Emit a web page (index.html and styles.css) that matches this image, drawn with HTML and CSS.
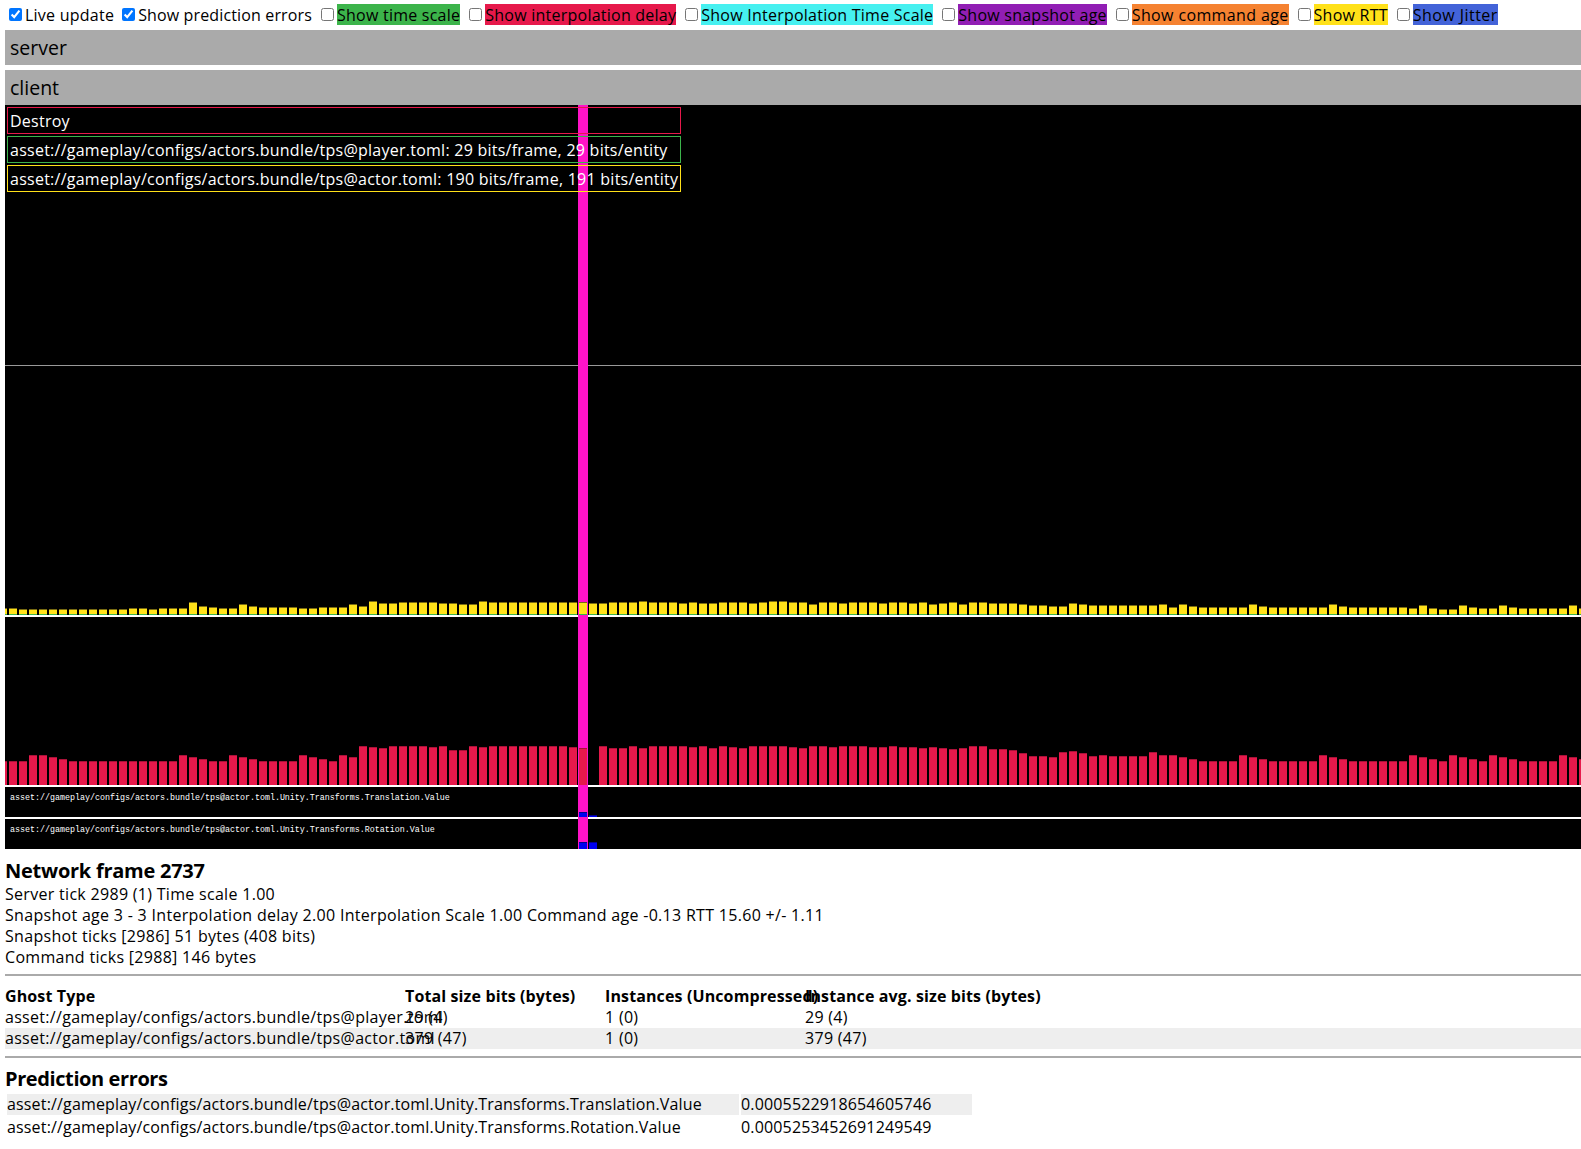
FILE: index.html
```html
<!DOCTYPE html>
<html lang="en">
<head>
<meta charset="UTF-8" />
<title>Network Debugger</title>
<link rel="stylesheet" href="styles.css">
</head>
<body>
  <div class="controls">
    <label class="opt opt-first"><input type="checkbox" checked /><span>Live update</span></label>
    <label class="opt"><input type="checkbox" checked /><span class="tight">Show prediction errors</span></label>
    <label class="opt"><input type="checkbox" /><span class="green">Show time scale</span></label>
    <label class="opt"><input type="checkbox" /><span class="red">Show interpolation delay</span></label>
    <label class="opt"><input type="checkbox" /><span class="cyan">Show Interpolation Time Scale</span></label>
    <label class="opt"><input type="checkbox" /><span class="purple">Show snapshot age</span></label>
    <label class="opt"><input type="checkbox" /><span class="orange">Show command age</span></label>
    <label class="opt"><input type="checkbox" /><span class="yellow">Show RTT</span></label>
    <label class="opt"><input type="checkbox" /><span class="blue">Show Jitter</span></label>
  </div>

  <div class="world">server</div>
  <div class="world client">client</div>

  <div class="graphs">
    <div class="selected"></div>

    <div class="graph graph-top">
      <div class="box box-red">Destroy</div>
      <div class="box box-green">asset://gameplay/configs/actors.bundle/tps@player.toml: 29 bits/frame, 29 bits/entity</div>
      <div class="box box-yellow">asset://gameplay/configs/actors.bundle/tps@actor.toml: 190 bits/frame, 191 bits/entity</div>
    </div>
    <div class="graph graph-size" id="sizeBars"></div>
    <div class="graph graph-delay" id="delayBars"></div>
    <div class="graph graph-error" id="errorA">
      <div class="graph-label">asset://gameplay/configs/actors.bundle/tps@actor.toml.Unity.Transforms.Translation.Value</div>
    </div>
    <div class="graph graph-error" id="errorB">
      <div class="graph-label">asset://gameplay/configs/actors.bundle/tps@actor.toml.Unity.Transforms.Rotation.Value</div>
    </div>
  </div>

  <h3 class="frame-title">Network frame 2737</h3>
  <div class="stats">
    <div>Server tick 2989 (1) Time scale 1.00</div>
    <div>Snapshot age 3 - 3 Interpolation delay 2.00 Interpolation Scale 1.00 Command age -0.13 RTT 15.60 +/- 1.11</div>
    <div>Snapshot ticks [2986] 51 bytes (408 bits)</div>
    <div>Command ticks [2988] 146 bytes</div>
  </div>

  <hr class="hr-ghosts" />

  <div class="ghost-row ghost-head">
    <div>Ghost Type</div><div>Total size bits (bytes)</div><div>Instances (Uncompressed)</div><div>Instance avg. size bits (bytes)</div>
  </div>
  <div class="ghost-row">
    <div>asset://gameplay/configs/actors.bundle/tps@player.toml</div><div>29 (4)</div><div>1 (0)</div><div>29 (4)</div>
  </div>
  <div class="ghost-row ghost-alt">
    <div>asset://gameplay/configs/actors.bundle/tps@actor.toml</div><div>379 (47)</div><div>1 (0)</div><div>379 (47)</div>
  </div>

  <hr class="hr-errors" />

  <h3 class="errors-title">Prediction errors</h3>
  <table class="errors">
    <tr class="errors-alt">
      <td>asset://gameplay/configs/actors.bundle/tps@actor.toml.Unity.Transforms.Translation.Value</td>
      <td>0.0005522918654605746</td>
    </tr>
    <tr>
      <td>asset://gameplay/configs/actors.bundle/tps@actor.toml.Unity.Transforms.Rotation.Value</td>
      <td>0.0005253452691249549</td>
    </tr>
  </table>

  <script>
    // One value per network frame, bar n sits at x = 10 * n - 6 inside the graph
    const SIZE = [7,7,6,6,6,6,6,6,6,6,6,6,6,7,7,6,7,7,7,13,9,8,7,7,11,9,8,8,8,8,7,7,8,8,8,11,9,14,12,12,13,
      13,13,13,12,12,11,11,14,13,13,13,13,13,13,13,13,13,13,12,12,13,13,13,14,13,13,13,12,13,12,12,13,13,13,12,13,14,14,13,
      13,11,13,13,12,13,13,13,12,13,13,12,13,11,12,13,11,13,13,12,12,12,11,10,10,9,9,12,11,10,10,10,10,10,10,10,11,8,11,9,
      8,8,8,8,8,11,9,8,8,8,8,8,8,11,9,8,8,8,8,8,8,7,10,7,6,6,10,8,7,7,10,8,7,7,7,7,7,10,7];

    const DELAY = [24,24,24,30,30,28,26,24,24,24,24,24,24,24,24,24,24,24,30,28,26,24,24,30,28,26,24,24,24,24,30,28,26,24,30,28,
      39,38,37,39,39,39,39,38,39,35,35,39,38,39,39,39,39,39,39,39,39,38,37,0,
      39,37,37,39,37,39,39,39,39,38,39,37,39,38,37,39,39,39,39,38,37,39,39,38,39,39,39,38,38,39,38,38,37,38,37,36,37,39,39,36,36,35,
      32,29,29,28,33,34,32,29,30,29,29,29,29,33,30,30,28,26,24,24,24,24,30,28,26,24,24,24,24,24,30,28,26,24,24,24,24,24,24,30,28,26,24,30,28,26,24,30,28,26,24,24,24,24,30,28,26];

    function drawBars(el, values, cls) {
      values.forEach((v, i) => {
        if (!v) return;
        const bar = document.createElement("div");
        bar.className = "bar " + cls;
        bar.style.left = (i * 10 - 6) + "px";
        bar.style.height = v + "px";
        el.appendChild(bar);
      });
    }

    drawBars(document.getElementById("sizeBars"), SIZE, "bar-size");
    drawBars(document.getElementById("delayBars"), DELAY, "bar-delay");

    // Only two frames have prediction errors
    function errorBars(id, a, b) {
      const el = document.getElementById(id);
      [[574, a], [584, b]].forEach(([x, h]) => {
        const bar = document.createElement("div");
        bar.className = "bar bar-error";
        bar.style.left = x + "px";
        bar.style.height = h + "px";
        el.appendChild(bar);
      });
    }
    errorBars("errorA", 5, 2);
    errorBars("errorB", 7, 7);
  </script>
</body>
</html>
```

FILE: styles.css
```css
* {
  box-sizing: border-box;
}
body {
  margin: 0 0 0 5px;
  width: 1576px;
  overflow: hidden;
  background: #fff;
  font-family: "Open Sans", "Noto Sans", sans-serif;
  font-size: 16px;
  line-height: 21px;
  color: #000;
}

.controls {
  display: flex;
  height: 30px;
  padding-top: 4px;
  white-space: nowrap;
  letter-spacing: 0.24px;
}
.opt {
  display: flex;
  align-items: center;
  height: 21px;
  margin-right: 5px;
}
.opt-first {
  margin-right: 4px;
}
.opt input {
  margin: 0 3px 0 4px;
}
.opt span {
  height: 21px;
  line-height: 23px;
}
.tight { letter-spacing: 0.14px; }
.green { background: #3cb44b; }
.red { background: #e6194b; }
.cyan { background: #46f0f0; }
.purple { background: #911eb4; }
.orange { background: #f58231; letter-spacing: 0.37px; }
.yellow { background: #ffe119; }
.blue { background: #4363d8; letter-spacing: 0.45px; }

.world {
  height: 35px;
  padding-left: 5px;
  background: #aaa;
  font-size: 19.5px;
  line-height: 36px;
}
.client {
  margin-top: 5px;
}

.graphs {
  position: relative;
  height: 744px;
  overflow: hidden;
}
.selected {
  position: absolute;
  left: 573px;
  top: 0;
  bottom: 0;
  width: 10px;
  background: #ff13c8;
  z-index: 2;
}
.graph {
  position: relative;
  background: #000;
}
.graph-top {
  height: 261px;
  padding: 2px 0 0 2px;
  border-bottom: 1px solid #999;
}
.graph-size {
  height: 249px;
}
.graph-delay {
  margin-top: 2px;
  height: 168px;
}
.graph-error {
  margin-top: 2px;
  height: 30px;
}

.box {
  width: 674px;
  height: 27px;
  margin-bottom: 2px;
  padding-left: 2px;
  border: 1px solid;
  color: #fff;
  letter-spacing: 0.25px;
  line-height: 27px;
  white-space: nowrap;
  position: relative;
  z-index: 3;
}
.box-red { border-color: #e6194b; }
.box-green { border-color: #3cb44b; }
.box-yellow { border-color: #ffe119; }

.bar {
  position: absolute;
  bottom: 0;
  width: 8px;
  z-index: 3;
}
.bar-size {
  background: #ffe119;
  border-top: 1px solid #7a6c12;
  border-bottom: 1px solid #3cb44b;
}
.bar-delay {
  background: #e6194b;
  border-top: 1px solid #a81238;
}
.bar-error {
  background: #0000f0;
  border-top: 1px solid #000090;
}

.graph-label {
  position: absolute;
  left: 5px;
  top: 5px;
  color: #fff;
  font-family: "Liberation Mono", monospace;
  font-size: 8.33px;
  line-height: 12px;
  white-space: nowrap;
}

h3 {
  margin: 0;
  font-size: 20px;
  font-weight: 700;
  line-height: 27px;
}
.frame-title {
  margin-top: 8px;
  letter-spacing: -0.25px;
}
.errors-title {
  letter-spacing: -0.4px;
}
.stats {
  letter-spacing: 0.3px;
}

hr {
  height: 2px;
  border: 0;
  background: #aaa;
}
.hr-ghosts {
  margin: 6px 0 10px;
}
.hr-errors {
  margin: 7px 0 7px;
}

.ghost-row {
  display: grid;
  grid-template-columns: 400px 200px 200px 1fr;
  height: 21px;
  white-space: nowrap;
  letter-spacing: 0.3px;
}
.ghost-head {
  font-weight: 700;
  letter-spacing: 0.12px;
}
.ghost-alt {
  background: #eee;
}

.errors {
  margin-top: 0;
  border-spacing: 2px;
  letter-spacing: 0.16px;
}
.errors td {
  padding: 0;
  height: 21px;
}
.errors td:first-child {
  width: 732px;
}
.errors td:last-child {
  width: 231px;
}
.errors-alt td {
  background: #eee;
}
```
